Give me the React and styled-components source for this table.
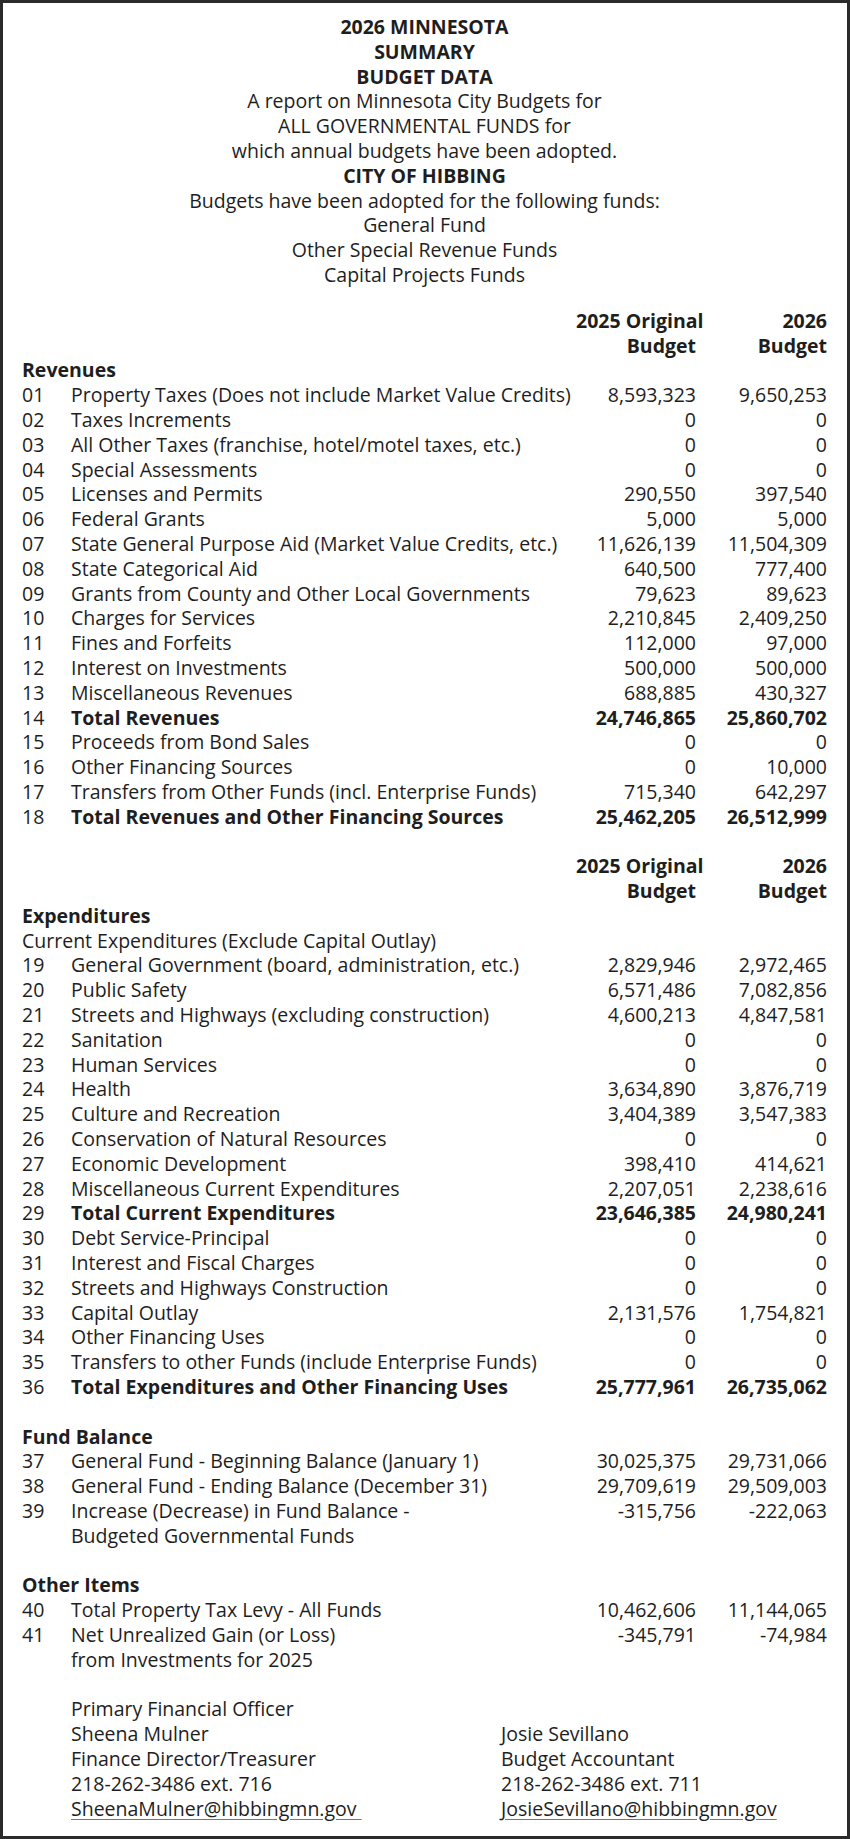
import React from "react";
import styled, { createGlobalStyle } from "styled-components";

const Global = createGlobalStyle`
  html, body { margin: 0; padding: 0; background: #fff; }
  body { font-family: "Open Sans", "Noto Sans", sans-serif; color: #1e1e1e; }
`;

const Page = styled.div`
  box-sizing: border-box;
  width: 850px;
  min-height: 1839px;
  border: 3px solid #2b2b2b;
  padding: 12px 20px 13px 19px;
  font-size: 19.5px;
  line-height: 24.8px;
`;

const Title = styled.div`
  text-align: center;
  margin-bottom: 21px;
`;

const Line = styled.div`
  font-weight: ${(p) => (p.$bold ? 700 : 400)};
`;

const Table = styled.div`
  display: grid;
  grid-template-columns: 49px 1fr 120px 131px;
`;

const Cell = styled.div`
  font-weight: ${(p) => (p.$bold ? 700 : 400)};
  text-align: ${(p) => (p.$right ? "right" : "left")};
  grid-column: ${(p) => p.$span || "auto"};
  white-space: nowrap;
`;

const Blank = styled.div`
  grid-column: 1 / -1;
  height: 24.8px;
`;

const Signatures = styled.div`
  display: grid;
  grid-template-columns: 430px 1fr;
  padding-left: 49px;
  margin-top: 24.8px;
`;

const Mail = styled.span`
  text-decoration: underline;
  text-decoration-color: #777;
  text-underline-offset: 3px;
  white-space: pre;
`;

const titleLines = [
  ["2026 MINNESOTA", true],
  ["SUMMARY", true],
  ["BUDGET DATA", true],
  ["A report on Minnesota City Budgets for", false],
  ["ALL GOVERNMENTAL FUNDS for", false],
  ["which annual budgets have been adopted.", false],
  ["CITY OF HIBBING", true],
  ["Budgets have been adopted for the following funds:", false],
  ["General Fund", false],
  ["Other Special Revenue Funds", false],
  ["Capital Projects Funds", false],
];

const revenues = [
  ["01", "Property Taxes (Does not include Market Value Credits)", "8,593,323", "9,650,253"],
  ["02", "Taxes Increments", "0", "0"],
  ["03", "All Other Taxes (franchise, hotel/motel taxes, etc.)", "0", "0"],
  ["04", "Special Assessments", "0", "0"],
  ["05", "Licenses and Permits", "290,550", "397,540"],
  ["06", "Federal Grants", "5,000", "5,000"],
  ["07", "State General Purpose Aid (Market Value Credits, etc.)", "11,626,139", "11,504,309"],
  ["08", "State Categorical Aid", "640,500", "777,400"],
  ["09", "Grants from County and Other Local Governments", "79,623", "89,623"],
  ["10", "Charges for Services", "2,210,845", "2,409,250"],
  ["11", "Fines and Forfeits", "112,000", "97,000"],
  ["12", "Interest on Investments", "500,000", "500,000"],
  ["13", "Miscellaneous Revenues", "688,885", "430,327"],
  ["14", "Total Revenues", "24,746,865", "25,860,702", true],
  ["15", "Proceeds from Bond Sales", "0", "0"],
  ["16", "Other Financing Sources", "0", "10,000"],
  ["17", "Transfers from Other Funds (incl. Enterprise Funds)", "715,340", "642,297"],
  ["18", "Total Revenues and Other Financing Sources", "25,462,205", "26,512,999", true],
];

const expenditures = [
  ["19", "General Government (board, administration, etc.)", "2,829,946", "2,972,465"],
  ["20", "Public Safety", "6,571,486", "7,082,856"],
  ["21", "Streets and Highways (excluding construction)", "4,600,213", "4,847,581"],
  ["22", "Sanitation", "0", "0"],
  ["23", "Human Services", "0", "0"],
  ["24", "Health", "3,634,890", "3,876,719"],
  ["25", "Culture and Recreation", "3,404,389", "3,547,383"],
  ["26", "Conservation of Natural Resources", "0", "0"],
  ["27", "Economic Development", "398,410", "414,621"],
  ["28", "Miscellaneous Current Expenditures", "2,207,051", "2,238,616"],
  ["29", "Total Current Expenditures", "23,646,385", "24,980,241", true],
  ["30", "Debt Service-Principal", "0", "0"],
  ["31", "Interest and Fiscal Charges", "0", "0"],
  ["32", "Streets and Highways Construction", "0", "0"],
  ["33", "Capital Outlay", "2,131,576", "1,754,821"],
  ["34", "Other Financing Uses", "0", "0"],
  ["35", "Transfers to other Funds (include Enterprise Funds)", "0", "0"],
  ["36", "Total Expenditures and Other Financing Uses", "25,777,961", "26,735,062", true],
];

const fundBalance = [
  ["37", "General Fund - Beginning Balance (January 1)", "30,025,375", "29,731,066"],
  ["38", "General Fund - Ending Balance (December 31)", "29,709,619", "29,509,003"],
  ["39", "Increase (Decrease) in Fund Balance -", "-315,756", "-222,063"],
  ["", "Budgeted Governmental Funds", "", ""],
];

const otherItems = [
  ["40", "Total Property Tax Levy - All Funds", "10,462,606", "11,144,065"],
  ["41", "Net Unrealized Gain (or Loss)", "-345,791", "-74,984"],
  ["", "from Investments for 2025", "", ""],
];

function Rows({ rows }) {
  return rows.map(([n, label, a, b, bold], i) => (
    <React.Fragment key={n + label + i}>
      <Cell>{n}</Cell>
      <Cell $bold={bold}>{label}</Cell>
      <Cell $right $bold={bold}>{a}</Cell>
      <Cell $right $bold={bold}>{b}</Cell>
    </React.Fragment>
  ));
}

function Header() {
  return (
    <>
      <Cell $span="3" $right $bold>2025 Original</Cell>
      <Cell $span="4" $right $bold>2026</Cell>
      <Cell $span="3" $right $bold>Budget</Cell>
      <Cell $span="4" $right $bold>Budget</Cell>
    </>
  );
}

export default function App() {
  return (
    <>
      <Global />
      <Page>
        <Title>
          {titleLines.map(([t, b]) => (
            <Line key={t} $bold={b}>{t}</Line>
          ))}
        </Title>
        <Table>
          <Header />
          <Cell $span="1 / -1" $bold>Revenues</Cell>
          <Rows rows={revenues} />
          <Blank />
          <Header />
          <Cell $span="1 / -1" $bold>Expenditures</Cell>
          <Cell $span="1 / -1">Current Expenditures (Exclude Capital Outlay)</Cell>
          <Rows rows={expenditures} />
          <Blank />
          <Cell $span="1 / -1" $bold>Fund Balance</Cell>
          <Rows rows={fundBalance} />
          <Blank />
          <Cell $span="1 / -1" $bold>Other Items</Cell>
          <Rows rows={otherItems} />
        </Table>
        <Signatures>
          <div>Primary Financial Officer</div>
          <div />
          <div>Sheena Mulner</div>
          <div>Josie Sevillano</div>
          <div>Finance Director/Treasurer</div>
          <div>Budget Accountant</div>
          <div>218-262-3486 ext. 716</div>
          <div>218-262-3486 ext. 711</div>
          <div><Mail>{"SheenaMulner@hibbingmn.gov "}</Mail></div>
          <div><Mail>JosieSevillano@hibbingmn.gov</Mail></div>
        </Signatures>
      </Page>
    </>
  );
}
